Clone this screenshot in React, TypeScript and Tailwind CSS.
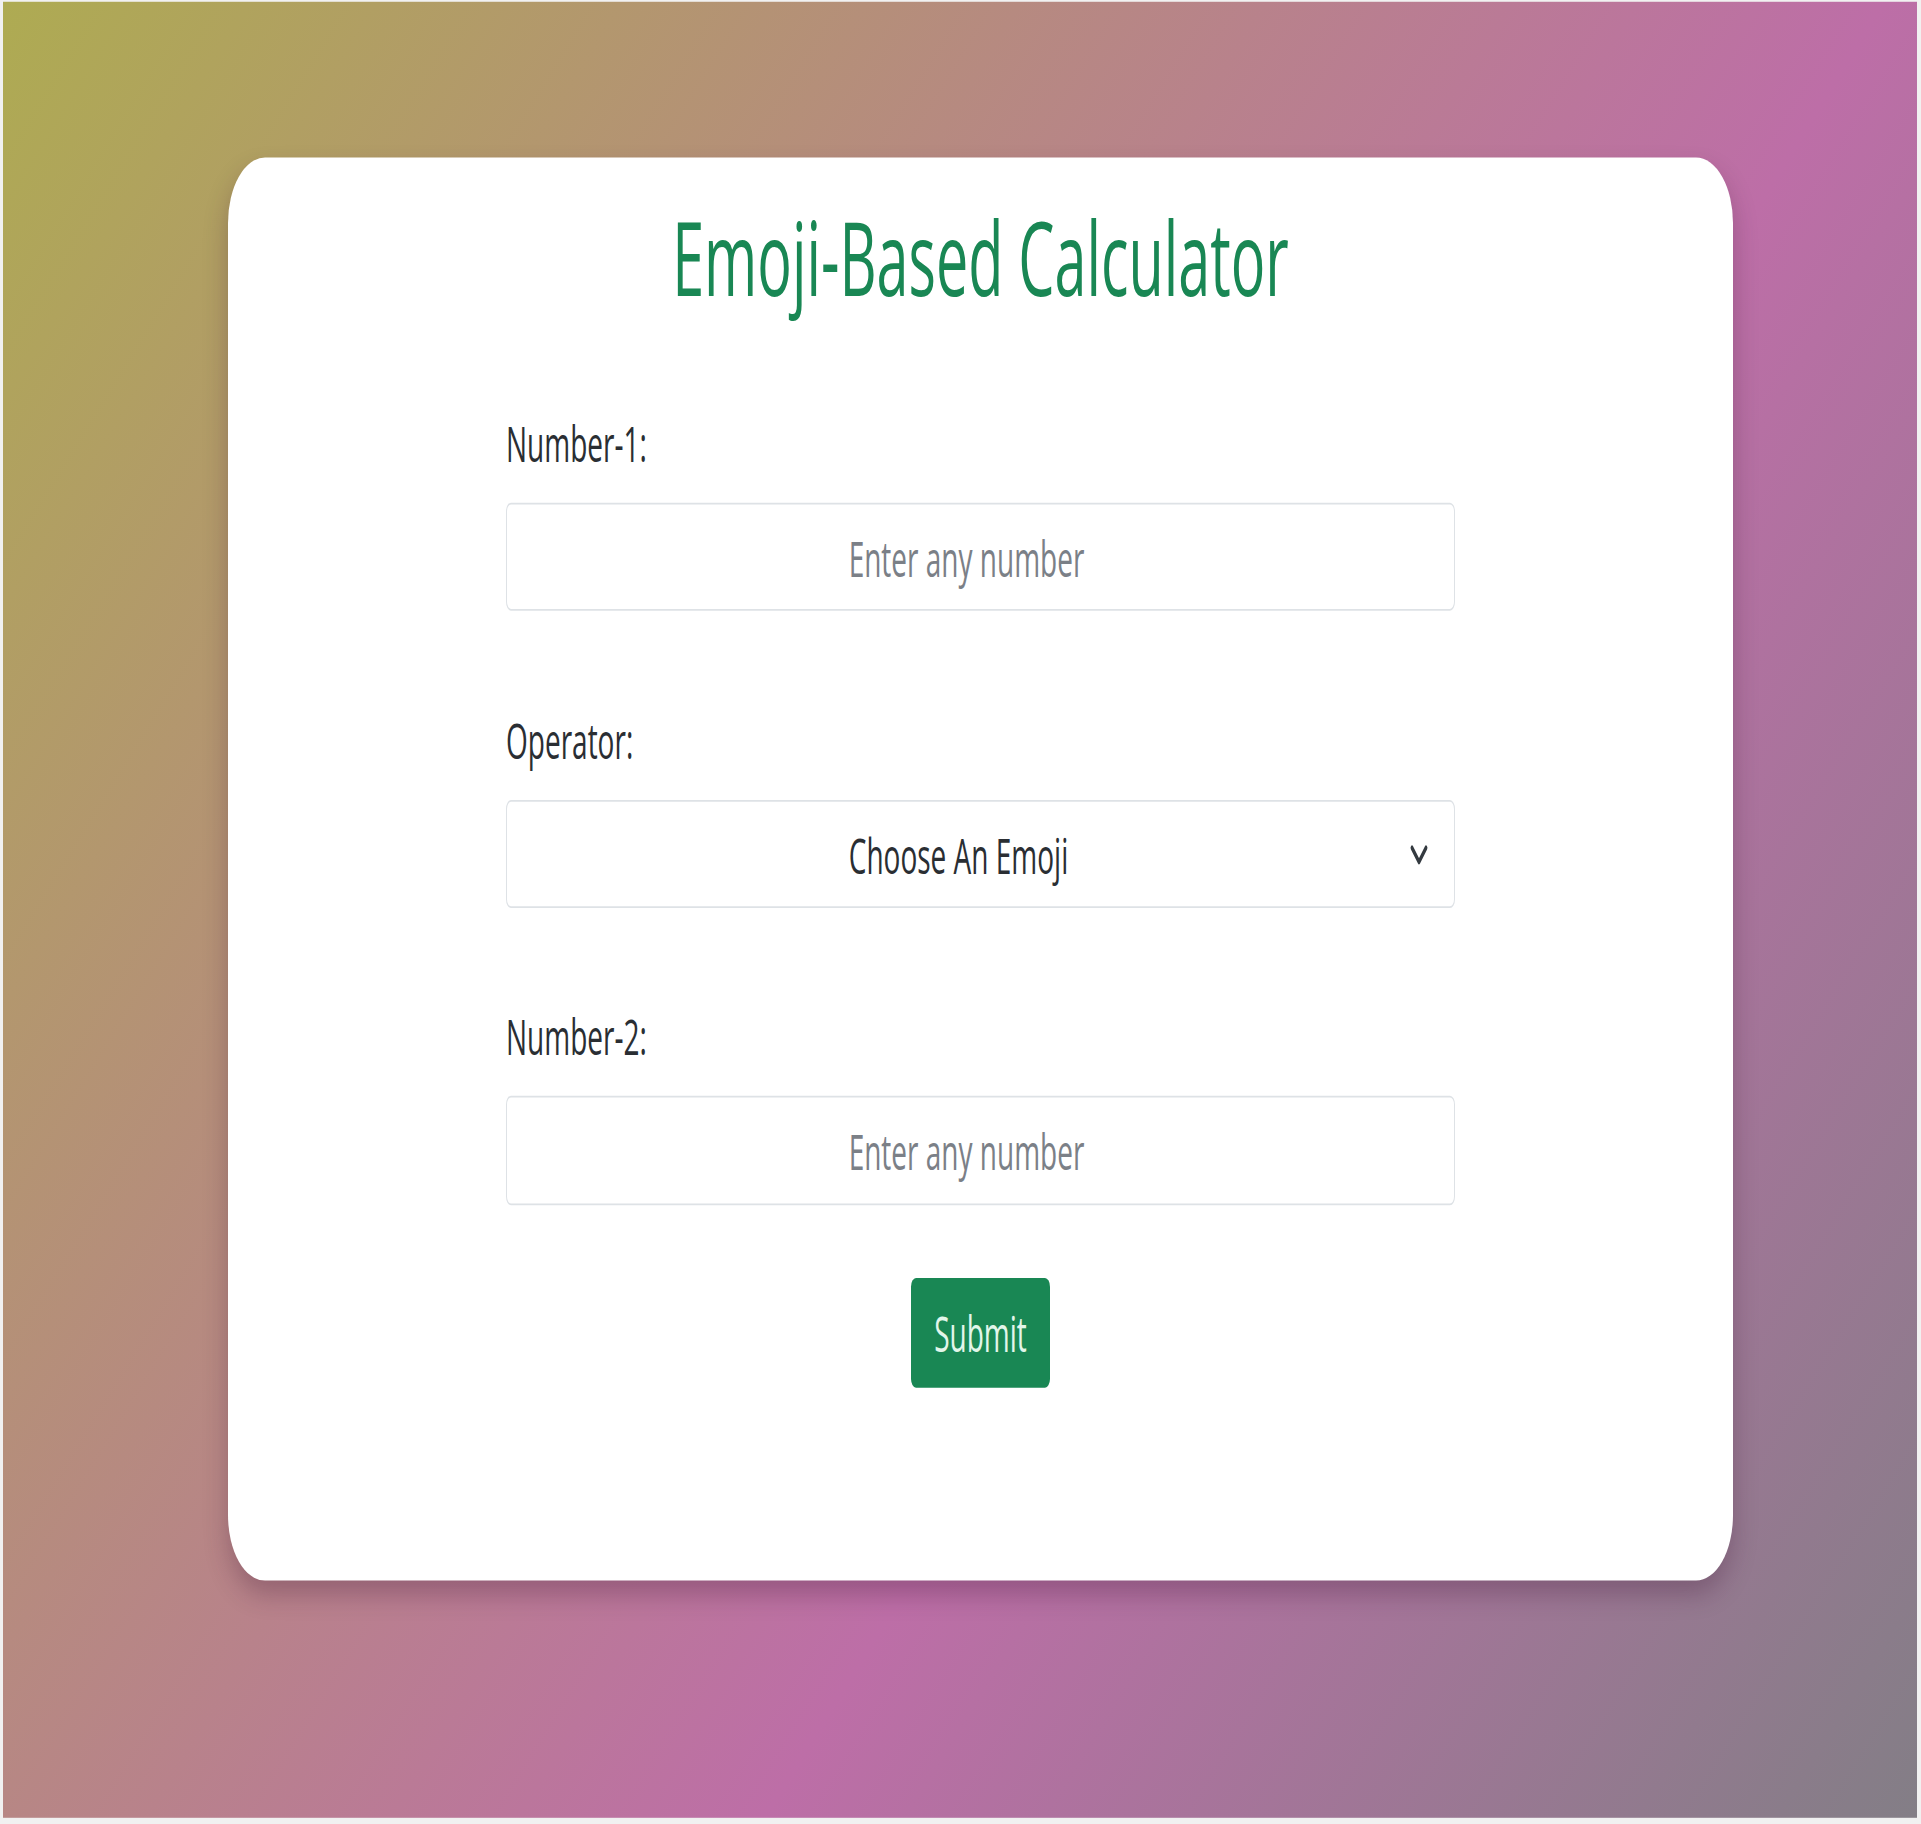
import React from "react";

function Field({ label, children }: { label: string; children: React.ReactNode }) {
  return (
    <div className="flex flex-col">
      <label className="block h-[28px] text-[28px] leading-none text-[#2a2e33]">{label}</label>
      <div className="mt-[20px]">{children}</div>
    </div>
  );
}

function NumberInput() {
  return (
    <input
      type="text"
      placeholder="Enter any number"
      className="block w-full h-[61.6px] rounded-[5px] border border-[#dee2e6] bg-white pl-[12px] pr-[40px] text-center text-[28px] leading-none text-[#212529] outline-none placeholder:text-[#7b8087]"
    />
  );
}

export default function App() {
  return (
    <div className="h-screen w-full overflow-hidden bg-[#f1f1f1]">
      <div
        className="h-[1030.5px] w-[1921px] origin-top scale-y-[1.77] bg-[#f1f1f1] pt-[1px] pl-[3px] pr-[4px] pb-[3.5px]"
        style={{ fontFamily: '"Open Sans", "Noto Sans", sans-serif' }}
      >
        <div className="h-full bg-[linear-gradient(137.5deg,#aeab52_0%,#bd6ea7_62%,#837e86_100%)] pt-[87.6px] pl-[225px]">
          <div className="flex w-[1505px] flex-col items-center rounded-[37px] bg-white pt-[29.5px] pb-[109px] shadow-[0_8px_18px_rgba(60,20,50,0.28)]">
            <h1 className="flex h-[56px] items-center text-[57.5px] font-normal leading-none text-[#198754]">
              Emoji-Based Calculator
            </h1>

            <form className="mt-[61.8px] flex w-[949px] flex-col items-stretch" onSubmit={(e) => e.preventDefault()}>
              <Field label="Number-1:">
                <NumberInput />
              </Field>

              <div className="mt-[58.5px]">
                <Field label="Operator:">
                  <div className="relative flex h-[61.2px] w-full items-center justify-center rounded-[5px] border border-[#dee2e6] bg-white pl-[12px] pr-[56px] text-[28px] leading-none text-[#2a2e33]">
                    <span>Choose An Emoji</span>
                    <svg
                      className="absolute right-[25px] top-1/2 -translate-y-1/2"
                      width="20"
                      height="12"
                      viewBox="0 0 20 12"
                      fill="none"
                    >
                      <path
                        d="M3 2 L10 10 L17 2"
                        stroke="#343a40"
                        strokeWidth="2.8"
                        strokeLinecap="round"
                        strokeLinejoin="round"
                      />
                    </svg>
                  </div>
                </Field>
              </div>

              <div className="mt-[58.2px]">
                <Field label="Number-2:">
                  <NumberInput />
                </Field>
              </div>

              <div className="mt-[41.2px] flex justify-center">
                <button
                  type="submit"
                  className="flex h-[62px] w-[139px] items-center justify-center rounded-[5px] bg-[#198754] text-[28px] leading-none text-[#e2f6ea]"
                >
                  Submit
                </button>
              </div>
            </form>
          </div>
        </div>
      </div>
    </div>
  );
}
